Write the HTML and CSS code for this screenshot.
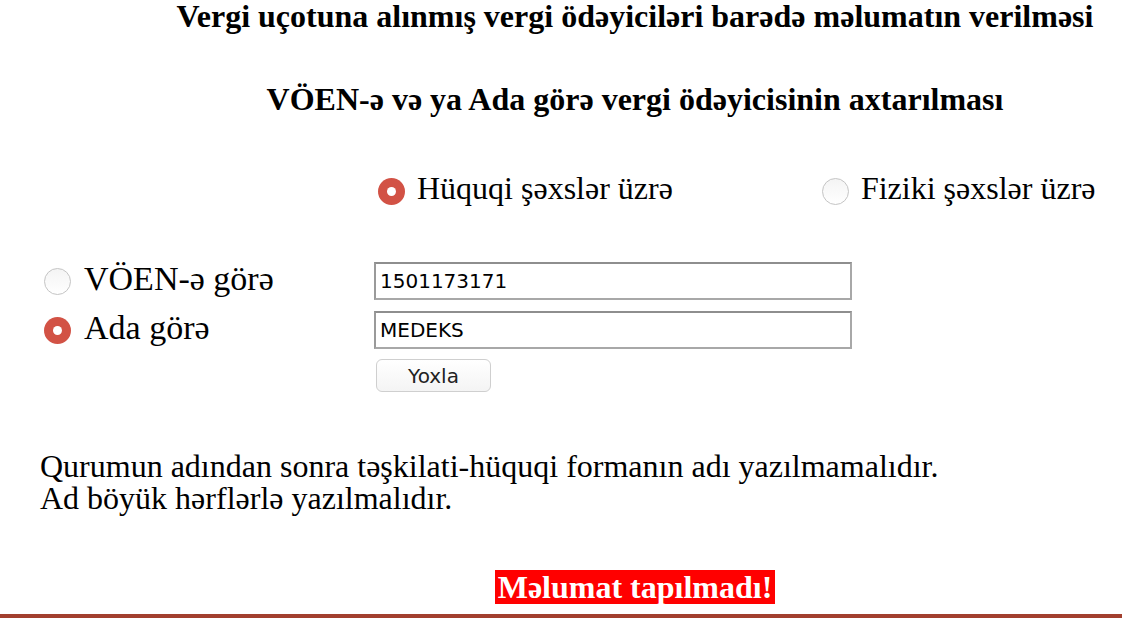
FILE: index.html
```html
<!DOCTYPE html>
<html lang="az">
<head>
<meta charset="utf-8">
<title>Vergi ödəyicisinin axtarılması</title>
<link rel="stylesheet" href="styles.css">
</head>
<body>
<div class="page">
  <h1 class="title">Vergi uçotuna alınmış vergi ödəyiciləri barədə məlumatın verilməsi</h1>
  <h2 class="subtitle">VÖEN-ə və ya Ada görə vergi ödəyicisinin axtarılması</h2>

  <div class="type-row">
    <label class="opt opt-legal"><span class="radio checked"></span>Hüquqi şəxslər üzrə</label>
    <label class="opt opt-phys"><span class="radio"></span>Fiziki şəxslər üzrə</label>
  </div>

  <div class="search">
    <label class="opt opt-side"><span class="radio"></span>VÖEN-ə görə</label>
    <input class="field" type="text" value="1501173171">
    <label class="opt opt-side"><span class="radio checked"></span>Ada görə</label>
    <input class="field" type="text" value="MEDEKS">
    <span></span>
    <div class="btn-cell"><button class="btn" type="button">Yoxla</button></div>
  </div>

  <p class="notes">Qurumun adından sonra təşkilati-hüquqi formanın adı yazılmamalıdır.<br>Ad böyük hərflərlə yazılmalıdır.</p>

  <div class="result"><span class="msg">Məlumat tapılmadı!</span></div>
</div>
<div class="bar"></div>
</body>
</html>
```
FILE: styles.css
```css
html, body {
  margin: 0;
  padding: 0;
  background: #fff;
  overflow: hidden;
}
body {
  font-family: "Liberation Serif", "Times New Roman", serif;
  color: #000;
  width: 1122px;
  height: 624px;
  position: relative;
}
.page {
  width: 1122px;
}
.title,
.subtitle {
  padding-left: 148px;
  font-size: 32px;
  font-weight: bold;
  text-align: center;
  line-height: 36px;
  white-space: nowrap;
}
.title {
  margin: -2px 0 0;
}
.subtitle {
  margin: 47px 0 0;
}
.type-row {
  display: flex;
  margin-top: 53px;
  padding-left: 378px;
  height: 36px;
}
.opt {
  display: flex;
  align-items: center;
  font-size: 32px;
  line-height: 36px;
  white-space: nowrap;
}
.opt-phys {
  margin-left: 149px;
}
.radio {
  width: 27px;
  height: 27px;
  border-radius: 50%;
  box-sizing: border-box;
  border: 1px solid #c4c4c4;
  background: linear-gradient(#f4f4f4, #ffffff);
  margin-right: 12px;
  margin-top: 7px;
  flex: none;
  position: relative;
}
.radio.checked {
  border: none;
  background: #d25245;
}
.radio.checked::after {
  content: "";
  position: absolute;
  left: 9px;
  top: 9px;
  width: 9px;
  height: 9px;
  border-radius: 50%;
  background: #fff;
}
.search {
  display: grid;
  grid-template-columns: 330px 478px;
  grid-auto-rows: 38px;
  row-gap: 11px;
  margin-top: 56px;
  padding-left: 44px;
  align-items: center;
}
.opt-side {
  font-size: 34px;
  line-height: 30px;
  height: 30px;
  margin-bottom: 4px;
}
.opt-side .radio {
  margin-top: 4px;
  margin-right: 13px;
}
.field {
  box-sizing: border-box;
  width: 478px;
  height: 38px;
  margin: 0;
  border: 2px solid #a8a8a8;
  border-top-color: #8e8e8e;
  border-left-color: #9a9a9a;
  padding: 0 4px;
  font-family: "DejaVu Sans", Verdana, sans-serif;
  font-size: 20px;
  color: #000;
  background: #fff;
  outline: none;
}
.btn-cell {
  align-self: start;
}
.btn {
  display: block;
  margin-left: 2px;
  margin-top: -1px;
  width: 115px;
  height: 33px;
  border: 1px solid #cfcfcf;
  border-radius: 6px;
  background: linear-gradient(#ffffff, #f4f4f4);
  font-family: "DejaVu Sans", Verdana, sans-serif;
  font-size: 20px;
  color: #222;
  padding: 0;
}
.notes {
  margin: 52px 0 0 40px;
  font-size: 32px;
  line-height: 32px;
  white-space: nowrap;
}
.result {
  margin-top: 56px;
  padding-left: 148px;
  text-align: center;
}
.msg {
  display: inline-block;
  background: #ff0000;
  color: #fff;
  font-weight: bold;
  font-size: 32px;
  line-height: 34px;
  padding: 0 3px;
}
.bar {
  position: absolute;
  left: 0;
  top: 614px;
  width: 1122px;
  height: 4px;
  background: #a23f2e;
}
```
